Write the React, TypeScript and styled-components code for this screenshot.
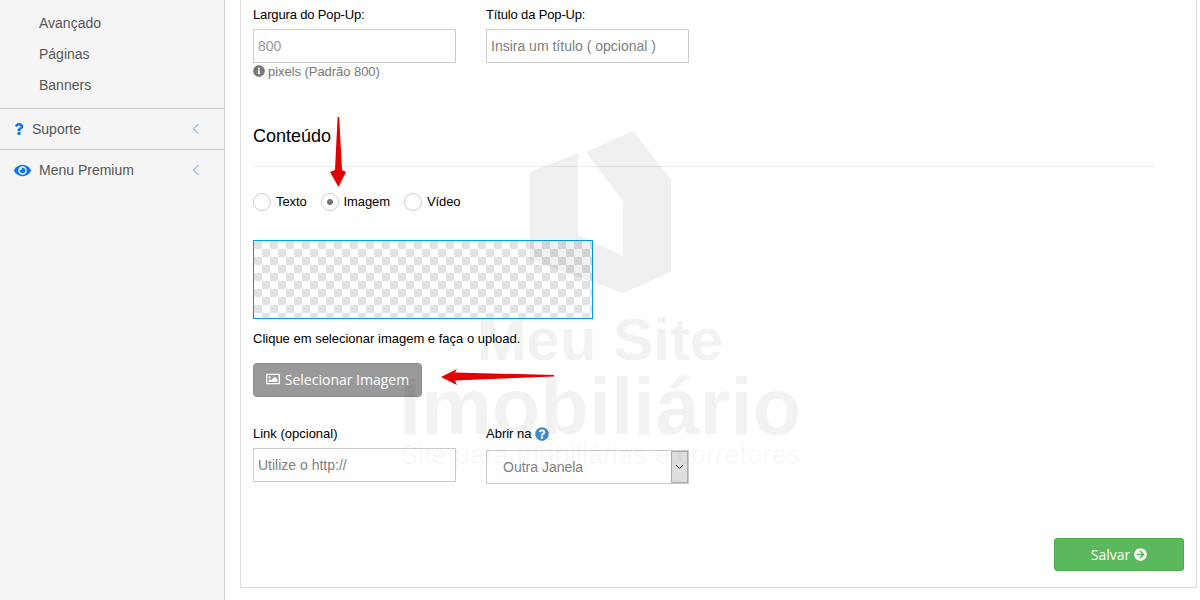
import React from "react";
import styled, { createGlobalStyle } from "styled-components";
import { FaArrowCircleRight, FaEye, FaInfoCircle, FaQuestion, FaQuestionCircle, FaRegImage } from "react-icons/fa";

const GlobalStyle = createGlobalStyle`
  html, body { margin: 0; height: 600px; overflow: hidden; background: #fff; }
  body { font-family: "Liberation Sans", Arial, sans-serif; color: #000; }
  * { box-sizing: border-box; }
`;

const Page = styled.div`
  display: flex;
  width: 1200px;
  height: 600px;
`;

const Sidebar = styled.aside`
  width: 225px;
  flex: none;
  background: #f5f5f5;
  border-right: 1px solid #d2d2d2;
  padding-top: 8px;
`;

const SubItem = styled.a`
  display: block;
  height: 31px;
  line-height: 31px;
  padding-left: 39px;
  font-size: 14px;
  color: #555;
`;

const MenuGroup = styled.div`
  margin-top: 7px;
  border-top: 1px solid #ccc;
`;

const MenuRow = styled.a`
  display: flex;
  align-items: center;
  height: 40px;
  padding: 0 24px 0 14px;
  font-size: 14px;
  color: #555;
  & > svg:first-child { color: #0a76f0; flex: none; }
`;

const QuestionIcon = styled(FaQuestion)`
  margin-left: -1px;
`;

const MenuDivider = styled.div`
  border-top: 1px solid #ccc;
`;

const MenuLabel = styled.span<{ $gap: number }>`
  flex: 1;
  margin-left: ${(p) => p.$gap}px;
`;

const Main = styled.main`
  flex: 1;
  padding: 0 3px 12px 15px;
`;

const Panel = styled.section`
  position: relative;
  height: 588px;
  border-left: 1px solid #ddd;
  border-right: 1px solid #ddd;
  border-bottom: 1px solid #ddd;
  padding: 7px 12px 0 12px;
`;

const FieldRow = styled.div`
  display: flex;
  gap: 30px;
`;

const Field = styled.div`
  width: 203px;
`;

const Label = styled.label`
  display: flex;
  align-items: center;
  gap: 3px;
  height: 15px;
  font-size: 13px;
  margin-bottom: 7px;
  & > svg { color: #428bca; }
`;

const PopupLabel = styled(Label)`
  letter-spacing: -0.15px;
`;

const TextInput = styled.input`
  display: block;
  width: 100%;
  height: 34px;
  border: 1px solid #ccc;
  padding: 0 4px;
  font: 14px "Liberation Sans", Arial, sans-serif;
  background: transparent;
  outline: none;
  &::placeholder { color: #808080; opacity: 1; }
`;

const WidthInput = styled(TextInput)`
  &::placeholder { color: #999; }
`;

const Hint = styled.div`
  display: flex;
  align-items: center;
  gap: 3px;
  height: 18px;
  padding-bottom: 2px;
  font-size: 13px;
  letter-spacing: -0.05px;
  color: #777;
`;

const SectionTitle = styled.h2`
  margin: 43px 0 0;
  height: 43px;
  padding-top: 1px;
  font-size: 18px;
  font-weight: 400;
  line-height: 22px;
  border-bottom: 1px solid #eee;
  width: 901px;
`;

const RadioRow = styled.div`
  display: flex;
  align-items: center;
  height: 18px;
  margin-top: 26px;
`;

const RadioOption = styled.label`
  display: flex;
  align-items: center;
  gap: 5px;
  font-size: 13px;
  letter-spacing: -0.1px;
  margin-right: 14px;
`;

const RadioText = styled.span`
  margin-top: -2px;
`;

const Radio = styled.input.attrs({ type: "radio", name: "tipo" })`
  appearance: none;
  width: 18px;
  height: 18px;
  margin: 0;
  border: 1px solid #ccc;
  border-radius: 50%;
  background: #fff;
  &:checked {
    background: radial-gradient(circle, #777 0 2.6px, #fff 3.4px);
  }
`;

const ImagePreview = styled.div`
  width: 340px;
  height: 79px;
  margin-top: 29px;
  border: 1px solid #00a0e0;
  background: repeating-conic-gradient(#e2e2e2 0 25%, #fff 0 50%) 8px 0 / 16px 16px padding-box;
`;

const UploadHint = styled.p`
  margin: 12px 0 0;
  font-size: 13px;
  line-height: 15px;
`;

const SelectButton = styled.button`
  display: flex;
  align-items: center;
  justify-content: center;
  gap: 5px;
  width: 169px;
  height: 34px;
  margin-top: 17px;
  padding: 0 0 2px;
  border: 1px solid #8c8c8c;
  border-radius: 4px;
  background: #999;
  color: #fff;
  font: 14px "Open Sans", sans-serif;
`;

const LinkRow = styled(FieldRow)`
  margin-top: 29px;
`;

const SelectBox = styled.div`
  display: flex;
  height: 34px;
  margin-top: 9px;
  border: 1px solid #ccc;
  font-size: 14px;
  color: #808080;
`;

const SelectValue = styled.span`
  flex: 1;
  padding-left: 16px;
  line-height: 32px;
`;

const SelectArrow = styled.span`
  display: flex;
  align-items: center;
  justify-content: center;
  width: 17px;
  background: #ddd;
  border: 1px solid #aaa;
  color: #444;
`;

const Footer = styled.div`
  display: flex;
  justify-content: flex-end;
  width: 931px;
  margin-top: 54px;
`;

const SaveButton = styled.button`
  display: flex;
  align-items: center;
  justify-content: center;
  gap: 4px;
  width: 130px;
  height: 33px;
  padding: 0;
  border: 1px solid #4cae4c;
  border-radius: 3px;
  background: #5cb85c;
  color: #fff;
  font: 14px "Open Sans", sans-serif;
`;

const Watermark = styled.div`
  position: absolute;
  left: 159px;
  top: 131px;
  width: 400px;
  display: flex;
  flex-direction: column;
  align-items: center;
  color: rgba(0, 0, 0, 0.05);
  pointer-events: none;
`;

const WatermarkSvg = styled.svg`
  display: block;
  margin-bottom: 12px;
`;

const WatermarkBig = styled.div<{ $size: number; $height: number }>`
  font-size: ${(p) => p.$size}px;
  line-height: ${(p) => p.$height}px;
  font-weight: 700;
  white-space: nowrap;
`;

const WatermarkSub = styled.div`
  font-size: 27.3px;
  line-height: 30px;
  margin-top: 1px;
  color: rgba(0, 0, 0, 0.04);
  white-space: nowrap;
`;

const Arrow = styled.svg<{ $x: number; $y: number }>`
  position: absolute;
  left: ${(p) => p.$x}px;
  top: ${(p) => p.$y}px;
`;

const ChevronLeft = () => (
  <svg width="8" height="12" viewBox="0 0 8 12" fill="none" stroke="#5a9ef0" strokeWidth="1">
    <path d="M6.5 1 L1.5 6 L6.5 11" />
  </svg>
);

export default function App() {
  return (
    <Page>
      <GlobalStyle />
      <Sidebar>
        <SubItem>Avançado</SubItem>
        <SubItem>Páginas</SubItem>
        <SubItem>Banners</SubItem>
        <MenuGroup>
          <MenuRow>
            <QuestionIcon size={12} />
            <MenuLabel $gap={7}>Suporte</MenuLabel>
            <ChevronLeft />
          </MenuRow>
          <MenuDivider />
          <MenuRow>
            <FaEye size={17} />
            <MenuLabel $gap={8}>Menu Premium</MenuLabel>
            <ChevronLeft />
          </MenuRow>
        </MenuGroup>
      </Sidebar>
      <Main>
        <Panel>
          <FieldRow>
            <Field>
              <PopupLabel>Largura do Pop-Up:</PopupLabel>
              <WidthInput placeholder="800" />
              <Hint>
                <FaInfoCircle size={12} />
                pixels (Padrão 800)
              </Hint>
            </Field>
            <Field>
              <PopupLabel>Título da Pop-Up:</PopupLabel>
              <TextInput placeholder="Insira um título ( opcional )" />
            </Field>
          </FieldRow>
          <SectionTitle>Conteúdo</SectionTitle>
          <RadioRow>
            <RadioOption>
              <Radio />
              <RadioText>Texto</RadioText>
            </RadioOption>
            <RadioOption>
              <Radio defaultChecked />
              <RadioText>Imagem</RadioText>
            </RadioOption>
            <RadioOption>
              <Radio />
              <RadioText>Vídeo</RadioText>
            </RadioOption>
          </RadioRow>
          <ImagePreview />
          <UploadHint>Clique em selecionar imagem e faça o upload.</UploadHint>
          <SelectButton>
            <FaRegImage size={14} />
            Selecionar Imagem
          </SelectButton>
          <LinkRow>
            <Field>
              <Label>Link (opcional)</Label>
              <TextInput placeholder="Utilize o http://" />
            </Field>
            <Field>
              <Label>
                Abrir na
                <FaQuestionCircle size={14} />
              </Label>
              <SelectBox>
                <SelectValue>Outra Janela</SelectValue>
                <SelectArrow>
                  <svg width="9" height="6" viewBox="0 0 9 6" fill="none" stroke="#444" strokeWidth="1">
                    <path d="M1 1 L4.5 4.5 L8 1" />
                  </svg>
                </SelectArrow>
              </SelectBox>
            </Field>
          </LinkRow>
          <Footer>
            <SaveButton>
              Salvar
              <FaArrowCircleRight size={13} />
            </SaveButton>
          </Footer>
          <Watermark>
            <WatermarkSvg width="141" height="162" viewBox="530 131 141 162" fill="rgba(0, 0, 0, 0.06)">
              <path d="M530 172 L578 153 L578 235 L623 256 L623 201.7 L586 152 L633 131 L671 179 L671 272 L623 293 L530 260 Z" />
            </WatermarkSvg>
            <WatermarkBig $size={60} $height={70}>
              Meu Site
            </WatermarkBig>
            <WatermarkBig $size={79.5} $height={64}>
              Imobiliário
            </WatermarkBig>
            <WatermarkSub>Site para mobiliárias e corretores</WatermarkSub>
          </Watermark>
          <Arrow $x={88} $y={117} width="18" height="72" viewBox="0 0 18 72">
            <path d="M8.6 0 L10.2 0 L13 53 L17 55 L9.5 70 L1 55 L6 53 Z" fill="#e00000" />
          </Arrow>
          <Arrow $x={199} $y={366} width="116" height="22" viewBox="0 0 116 22">
            <defs>
              <linearGradient id="arrowShade" x1="0" y1="0" x2="0" y2="1">
                <stop offset="0" stopColor="#f00000" />
                <stop offset="0.7" stopColor="#e00000" />
                <stop offset="1" stopColor="#a01010" />
              </linearGradient>
            </defs>
            <path d="M1 11 L17 3 L15 6.5 L114 9 L114 10.5 L15 14.5 L17 19 Z" fill="url(#arrowShade)" />
          </Arrow>
        </Panel>
      </Main>
    </Page>
  );
}
